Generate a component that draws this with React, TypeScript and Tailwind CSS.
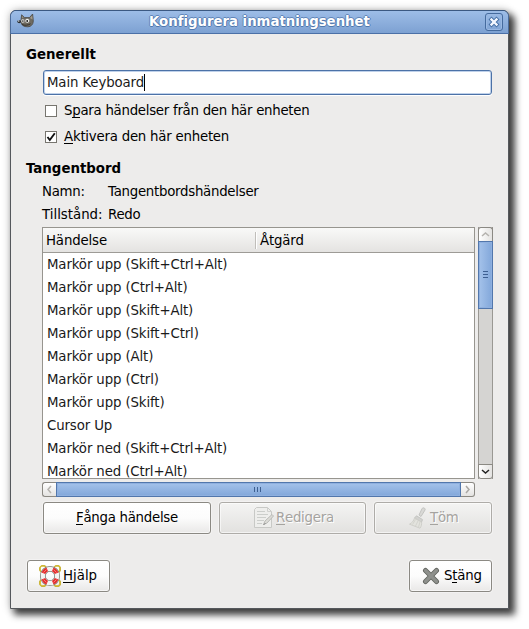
import React from 'react';

const events = [
  'Markör upp (Skift+Ctrl+Alt)',
  'Markör upp (Ctrl+Alt)',
  'Markör upp (Skift+Alt)',
  'Markör upp (Skift+Ctrl)',
  'Markör upp (Alt)',
  'Markör upp (Ctrl)',
  'Markör upp (Skift)',
  'Cursor Up',
  'Markör ned (Skift+Ctrl+Alt)',
  'Markör ned (Ctrl+Alt)',
];

function Key({ children }: { children: string }) {
  return <span className="border-b border-current inline-block h-[15px] leading-[15px]">{children}</span>;
}

function Wilber() {
  return (
    <svg width="18" height="16" viewBox="0 0 18 16" className="mt-[2px]">
      <path d="M4 7 4.600 1.800 7.500 4.600h5L15.600 1l.6 5.500c.5 4-1.400 7.300-5.700 7.300-3.800 0-5.800-1.500-6.500-4.300Z" fill="#6f6b61" stroke="#4a4843" strokeWidth=".8" />
      <path d="m13 5 2.200-2.600.4 4.200ZM5.100 3l.2 2.200 1.200-.8Z" fill="#a39c8d" />
      <ellipse cx="2.200" cy="8.600" rx="1.900" ry="1.700" fill="#2c3033" />
      <circle cx="1.700" cy="8" r=".8" fill="#d5dce4" />
      <circle cx="5.900" cy="8" r="1.900" fill="#f5f5f2" stroke="#46443f" strokeWidth=".4" />
      <circle cx="10.300" cy="7.800" r="2.300" fill="#f5f5f2" stroke="#46443f" strokeWidth=".4" />
      <circle cx="5.900" cy="8.100" r=".8" fill="#111" />
      <circle cx="10.200" cy="8" r=".9" fill="#111" />
      <path d="M5 11.500c2.600 1.200 6 .9 8.500-.7" fill="none" stroke="#33302b" strokeWidth="1" />
    </svg>
  );
}

function Buoy() {
  return (
    <svg width="22" height="22" viewBox="0 0 22 22">
      {[[4, 4], [18, 4], [4, 18], [18, 18]].map(([x, y]) => (
        <g key={`${x}-${y}`}>
          <circle cx={x} cy={y} r="3.200" fill="none" stroke="#b59a0c" strokeWidth="1.600" />
          <circle cx={x} cy={y} r="3.200" fill="none" stroke="#f1dc60" strokeWidth=".7" />
        </g>
      ))}
      <circle cx="11" cy="11" r="7.200" fill="none" stroke="#7c8078" strokeWidth="5.800" />
      <circle cx="11" cy="11" r="7.200" fill="none" stroke="#f4f4f2" strokeWidth="4.200" />
      <circle cx="11" cy="11" r="7.200" fill="none" stroke="#e62f2f" strokeWidth="4.200" pathLength="8" strokeDasharray="1 1" strokeDashoffset="-.5" />
      <path d="M4.500 7.500 7.400 4.600M14.600 4.600l2.900 2.900M4.500 14.500l2.900 2.900M14.600 17.400l2.900-2.900" stroke="#ff9b91" strokeWidth=".7" />
    </svg>
  );
}

function EditIcon() {
  return (
    <svg width="20" height="22" viewBox="0 0 20 22" fill="none">
      <path d="M2.500.5h11l4 4v16H.5v-18Z" fill="#eeeeec" stroke="#c8c9c6" />
      <path d="M13.500.5v4h4" stroke="#d0d1ce" />
      <path d="M3 4.500h8M3 7.500h11M3 10.500h9M3 13.500h7M3 16.500h5" stroke="#cccecb" />
      <path d="m9.500 17.500 1.500-3.500 7-6.500 1.500 1.500-6.500 7Z" fill="#dcdcd7" stroke="#b5b6b2" strokeWidth=".9" />
      <path d="m9.500 17.500 2-1" stroke="#888" />
    </svg>
  );
}

function BroomIcon() {
  return (
    <svg width="18" height="22" viewBox="0 0 18 22" fill="none">
      <path d="m12 9.500-2-1.500 3-6.300c.8-1.600 3.600-.7 3.100 1.200Z" fill="#d9d9d6" stroke="#c2c3c0" />
      <path d="m7.500 8.800 6 3.800-1 2.500-7-4Z" fill="#d2d2cf" stroke="#c4c5c2" />
      <path d="M5.500 11.200c-.8 2.600-2.400 4.600-5 6l10.500 4c1.300-1.700 1.900-3.800 1.500-6.100Z" fill="#e3e3de" stroke="#cfcfca" />
      <path d="m6.500 12.500-3 5M9 14l-2.500 5M11 15l-1.500 5" stroke="#cfcfc9" strokeWidth=".8" />
    </svg>
  );
}

function Grip({ vertical = false }: { vertical?: boolean }) {
  return (
    <div className={vertical ? 'flex flex-col gap-[2px]' : 'flex gap-[2px]'}>
      {[0, 1, 2].map((i) => (
        <i key={i} className={vertical ? 'block h-px w-[5px] bg-[#3d5f91]' : 'block h-[5px] w-px bg-[#3d5f91]'} />
      ))}
    </div>
  );
}

function Chevron({ d, color }: { d: string; color: string }) {
  return (
    <svg width="9" height="9" viewBox="0 0 9 9">
      <path d={d} fill="none" stroke={color} strokeWidth="1.5" />
    </svg>
  );
}

const live = 'border-[#8b8983] bg-linear-to-b from-white via-[#fcfcfc] to-[#e9e8e7] text-black';
const dim = 'border-[#aeaca8] bg-linear-to-b from-[#f4f4f3] to-[#e2e1df] text-[#a5a39f] [text-shadow:1px_1px_0_#fff]';
const button = 'flex h-8 shrink-0 items-center rounded-[3px] border shadow-[inset_0_0_0_1px_rgba(255,255,255,0.6),0_0_0_1px_rgba(255,255,255,0.35)]';

export default function App() {
  return (
    <main className="h-[629px] w-[529px] overflow-hidden bg-white pt-[10px] pl-[10px] font-['DejaVu_Sans',sans-serif] text-[13.33px] leading-[16px] whitespace-nowrap text-black">
      <section className="flex h-[599px] w-[499px] flex-col rounded-t-[6px] border border-[#55585c] bg-[#edeceb] shadow-[5px_5px_7px_1px_rgba(0,0,0,0.72),0_0_8px_rgba(0,0,0,0.25)]">
        <header className="flex h-[23px] shrink-0 rounded-t-[5px] border-b border-[#4b70a7] bg-linear-to-b from-[#9dbde7] to-[#7da1d2] pl-[6px] shadow-[0_-1px_0_#3b5982,-1px_0_0_#4b6b99,1px_0_0_#4b6b99]">
          <Wilber />
          <h1 className="ml-[114px] h-[23px] w-[222px] leading-[22px] font-bold tracking-[-0.03px] text-white [text-shadow:1px_0_#5078ad,-1px_0_#6186b9,0_1px_#5078ad,0_-1px_#6186b9]">Konfigurera inmatningsenhet</h1>
          <div className="mt-[2px] ml-[114px] flex size-[18px] items-center justify-center rounded-[3px] border border-[#456b9e] shadow-[inset_0_0_0_1px_#9ab9e3]">
            <svg width="12" height="12" viewBox="0 0 12 12" fill="none" strokeLinecap="square">
              <path d="m3.500 3.500 5 5m0-5-5 5" stroke="#426da4" strokeWidth="4.200" />
              <path d="m3.500 3.500 5 5m0-5-5 5" stroke="#f4f8ff" strokeWidth="2.400" />
            </svg>
          </div>
        </header>
        <div className="flex flex-col tracking-[-0.27px]">
          <h2 className="mt-[13px] ml-[15px] h-4 font-bold tracking-[0.03px]">Generellt</h2>
          <div className="mt-[7px] ml-8 flex h-[25px] w-[449px] items-center rounded-[3px] border border-[#4c72a7] bg-white pl-[3px] tracking-[-0.13px] text-[#1a1a1a] shadow-[inset_0_0_0_1px_#bfd1ea,0_1px_0_#fff]">
            Main Keyboard<i className="h-[17px] w-px bg-black" />
          </div>
          <label className="mt-2 ml-[34px] flex h-4 items-center gap-[7px]">
            <span className="size-3 border border-[#77756f] bg-white" />
            <span>S<Key>p</Key>ara händelser från den här enheten</span>
          </label>
          <label className="mt-[10px] ml-[34px] flex h-4 items-center gap-[7px]">
            <span className="flex size-3 border border-[#77756f] bg-white">
              <svg width="10" height="10" viewBox="0 0 10 10"><path d="m1.500 5 2.300 3L8.800 1.200" fill="none" stroke="#111" strokeWidth="1.900" /></svg>
            </span>
            <span className="tracking-[-0.23px]"><Key>A</Key>ktivera den här enheten</span>
          </label>
          <h2 className="mt-4 ml-[15px] h-4 font-bold tracking-[0px]">Tangentbord</h2>
          <dl className="mt-[7px] ml-[31px] grid grid-cols-[66px_auto] gap-y-[7px]">
            <dt>Namn:</dt><dd>Tangentbordshändelser</dd>
            <dt className="tracking-[0px]">Tillstånd:</dt><dd>Redo</dd>
          </dl>
          <div className="mt-[4px] ml-[31px] flex h-[252px] gap-[3px]">
            <div className="flex w-[433px] flex-col overflow-hidden border border-[#97958f] bg-white">
              <div className="flex h-[25px] shrink-0 items-center border-b border-[#9d9b96] bg-linear-to-b from-[#f9f9f8] to-[#e4e3e1] pt-px pl-[3px] tracking-[-0.15px]">
                <span className="w-[209px]">Händelse</span>
                <i className="mr-[3px] h-[17px] w-[2px] border-l border-[#c0beba] bg-white" />
                <span>Åtgärd</span>
              </div>
              <ul className="pl-1 tracking-[-0.13px] text-[#1a1a1a]">
                {events.map((e) => <li key={e} className="h-[23px] leading-[23px]">{e}</li>)}
              </ul>
            </div>
            <div className="flex w-[15px] flex-col border-x border-[#9a9893] bg-[#d5d4d2]">
              <div className="-mx-px flex h-[14px] shrink-0 items-center justify-center rounded-t-[3px] border border-b-0 border-[#8b8983] bg-linear-to-r from-white to-[#e4e3e1]"><Chevron d="m1 6 3.500-3L8 6" color="#b5b3af" /></div>
              <div className="-mx-px flex h-[68px] shrink-0 items-center justify-center border border-[#5277ac] bg-linear-to-r from-[#a4c2ea] to-[#82a7da] pb-[2px] shadow-[inset_0_0_0_1px_#8fb0df]"><Grip vertical /></div>
              <div className="-mx-px mt-auto flex h-[15px] shrink-0 items-center justify-center rounded-b-[3px] border border-[#8b8983] bg-linear-to-r from-white to-[#e4e3e1]"><Chevron d="m1 3 3.500 3L8 3" color="#222" /></div>
            </div>
          </div>
          <div className="mt-[3px] ml-[31px] flex h-[15px] w-[433px]">
            <div className="flex w-[14px] items-center justify-center rounded-l-[3px] border border-r-0 border-[#8b8983] bg-linear-to-b from-white to-[#e4e3e1]"><Chevron d="M6 1 3 4.500 6 8" color="#b5b3af" /></div>
            <div className="flex flex-1 items-center justify-center border border-[#5277ac] bg-linear-to-b from-[#a4c2ea] to-[#82a7da] pr-[3px] shadow-[inset_0_0_0_1px_#8fb0df]"><Grip /></div>
            <div className="flex w-[14px] items-center justify-center rounded-r-[3px] border border-l-0 border-[#8b8983] bg-linear-to-b from-white to-[#e4e3e1]"><Chevron d="m3 1 3 3.500L3 8" color="#aaa8a4" /></div>
          </div>
          <div className="mt-[5px] ml-8 flex">
            <button className={`${button} ${live} w-[168px] pl-8`}><span><Key>F</Key>ånga händelse</span></button>
            <button className={`${button} ${dim} ml-2 w-[147px] gap-[2px] pl-[34px]`}><EditIcon /><span><Key>R</Key>edigera</span></button>
            <button className={`${button} ${dim} ml-2 w-[118px] gap-[3px] pl-[34px]`}><BroomIcon /><span><Key>T</Key>öm</span></button>
          </div>
          <footer className="mt-[26px] mr-4 ml-4 flex justify-between">
            <button className={`${button} ${live} w-[83px] gap-[2px] pl-[11px] tracking-[0px]`}><Buoy /><span><Key>H</Key>jälp</span></button>
            <button className={`${button} ${live} w-[83px] gap-[4px] pl-[12px] tracking-[-0.2px]`}>
              <svg width="18" height="18" viewBox="0 0 18 18" fill="none" strokeLinecap="round">
                <path d="m3.500 3.500 11 11m0-11-11 11" stroke="#62645f" strokeWidth="5" />
                <path d="m3.500 3.500 11 11m0-11-11 11" stroke="#8e908c" strokeWidth="3.200" />
              </svg>
              <span>S<Key>t</Key>äng</span>
            </button>
          </footer>
        </div>
      </section>
    </main>
  );
}
